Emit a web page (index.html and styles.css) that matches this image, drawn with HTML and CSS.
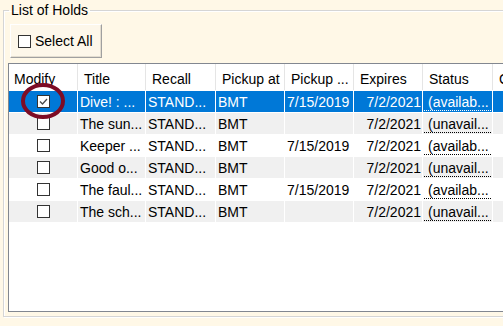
FILE: index.html
```html
<!DOCTYPE html>
<html>
<head>
<meta charset="utf-8">
<link rel="stylesheet" href="styles.css">
</head>
<body>
<fieldset class="group">
  <legend class="group-title">List of Holds</legend>
  <div class="group-body">
    <div class="toolbar">
      <button class="btn" type="button"><span class="cb"></span><span>Select All</span></button>
    </div>
    <div class="grid">
      <div class="row head">
        <div class="c first">Modify</div>
        <div class="c">Title</div>
        <div class="c">Recall</div>
        <div class="c">Pickup at</div>
        <div class="c">Pickup ...</div>
        <div class="c">Expires</div>
        <div class="c">Status</div>
        <div class="c">C</div>
      </div>
      <div class="row sel">
        <div class="c first"><span class="cb checked"><svg viewBox="0 0 11 11" width="11" height="11"><path d="M2 5.5 L4.5 8 L9 3" fill="none" stroke="#4a4a4a" stroke-width="1.3"/></svg></span></div>
        <div class="c">Dive! : ...</div>
        <div class="c">STAND...</div>
        <div class="c">BMT</div>
        <div class="c">7/15/2019</div>
        <div class="c r">7/2/2021</div>
        <div class="c st"><span class="link">(availab...</span></div>
        <div class="c"></div>
      </div>
      <div class="row alt">
        <div class="c first"><span class="cb"></span></div>
        <div class="c">The sun...</div>
        <div class="c">STAND...</div>
        <div class="c">BMT</div>
        <div class="c"></div>
        <div class="c r">7/2/2021</div>
        <div class="c st"><span class="link">(unavail...</span></div>
        <div class="c"></div>
      </div>
      <div class="row">
        <div class="c first"><span class="cb"></span></div>
        <div class="c">Keeper ...</div>
        <div class="c">STAND...</div>
        <div class="c">BMT</div>
        <div class="c">7/15/2019</div>
        <div class="c r">7/2/2021</div>
        <div class="c st"><span class="link">(availab...</span></div>
        <div class="c"></div>
      </div>
      <div class="row alt">
        <div class="c first"><span class="cb"></span></div>
        <div class="c">Good o...</div>
        <div class="c">STAND...</div>
        <div class="c">BMT</div>
        <div class="c"></div>
        <div class="c r">7/2/2021</div>
        <div class="c st"><span class="link">(unavail...</span></div>
        <div class="c"></div>
      </div>
      <div class="row">
        <div class="c first"><span class="cb"></span></div>
        <div class="c">The faul...</div>
        <div class="c">STAND...</div>
        <div class="c">BMT</div>
        <div class="c">7/15/2019</div>
        <div class="c r">7/2/2021</div>
        <div class="c st"><span class="link">(availab...</span></div>
        <div class="c"></div>
      </div>
      <div class="row alt">
        <div class="c first"><span class="cb"></span></div>
        <div class="c">The sch...</div>
        <div class="c">STAND...</div>
        <div class="c">BMT</div>
        <div class="c"></div>
        <div class="c r">7/2/2021</div>
        <div class="c st"><span class="link">(unavail...</span></div>
        <div class="c"></div>
      </div>
    </div>
  </div>
</fieldset>
<svg class="marker" width="48" height="40" viewBox="0 0 48 40"><ellipse cx="24" cy="20" rx="20" ry="16" fill="none" stroke="#7d0c25" stroke-width="4"/></svg>
</body>
</html>
```
FILE: styles.css
```css
html, body {
  margin: 0;
  padding: 0;
}
body {
  width: 503px;
  height: 326px;
  overflow: hidden;
  background: #fff8e7;
  font-family: "Liberation Sans", Arial, sans-serif;
  font-size: 14px;
  line-height: 16px;
  color: #000;
  padding-top: 2px;
  box-sizing: border-box;
}
.group {
  margin: 0 0 0 3px;
  padding: 0;
  width: 540px;
  box-sizing: border-box;
  border: 1px solid #d5d5d5;
  box-shadow: inset 1px 1px 0 #fff, 1px 1px 0 #fff;
  min-width: 0;
}
.group-title {
  margin-left: 5px;
  padding: 0 2px;
  line-height: 16px;
}
.group-body {
  padding: 6px 0 4px 4px;
}
.toolbar {
  display: flex;
  padding-left: 2px;
}
.btn {
  display: flex;
  align-items: center;
  gap: 4px;
  height: 34px;
  width: 92px;
  padding: 0 0 0 7px;
  margin: 0;
  box-sizing: border-box;
  font: inherit;
  color: #000;
  background: #fdf7ea;
  border: 1px solid;
  border-color: #fff #a0a0a0 #a0a0a0 #fff;
  box-shadow: inset -1px -1px 0 #e3ddd0;
}
.cb {
  display: inline-flex;
  align-items: center;
  justify-content: center;
  width: 13px;
  height: 13px;
  box-sizing: border-box;
  border: 1px solid #333;
  background: #fff;
  flex: none;
}
.grid {
  margin-top: 5px;
  height: 249px;
  box-sizing: border-box;
  background: #fff;
  border: 1px solid #828790;
  border-right: none;
}
.row {
  display: grid;
  grid-template-columns: 68px 68px 70px 69px 69px 69px 70px 100px;
  height: 22px;
  box-sizing: border-box;
  border-top: 1px solid #fff;
}
.row.head {
  height: 26px;
  border-top: none;
}
.c {
  display: flex;
  align-items: center;
  box-sizing: border-box;
  border-left: 1px solid #fff;
  padding-left: 2px;
  white-space: nowrap;
  overflow: hidden;
}
.c.first {
  border-left: none;
  justify-content: center;
  padding-left: 0;
}
.head .c {
  border-left-color: #e5e5e5;
  align-items: flex-start;
  padding: 7px 0 0 6px;
}
.head .c.first {
  justify-content: flex-start;
  padding-left: 5px;
}
.c.r {
  justify-content: flex-end;
  padding-right: 1px;
}
.c.st {
  padding: 0 1px;
}
.link {
  display: block;
  width: 100%;
  padding-left: 4px;
  box-sizing: border-box;
  border-bottom: 1px dotted #000;
  margin-top: 1px;
}
.row.alt {
  background: #f0f0f0;
}
.row.sel {
  background: #0078d7;
  color: #fff;
}
.row.sel .link {
  border-bottom-color: #fff;
}
.marker {
  position: absolute;
  left: 19px;
  top: 81px;
}
```
